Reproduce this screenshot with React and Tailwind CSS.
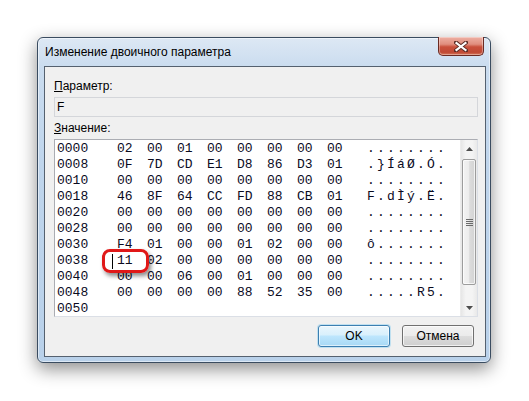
import React from 'react';

const rows = [
  ['0000', ['02', '00', '01', '00', '00', '00', '00', '00'], '........'],
  ['0008', ['0F', '7D', 'CD', 'E1', 'D8', '86', 'D3', '01'], '.}ÍáØ.Ó.'],
  ['0010', ['00', '00', '00', '00', '00', '00', '00', '00'], '........'],
  ['0018', ['46', '8F', '64', 'CC', 'FD', '88', 'CB', '01'], 'F.dÌý.Ë.'],
  ['0020', ['00', '00', '00', '00', '00', '00', '00', '00'], '........'],
  ['0028', ['00', '00', '00', '00', '00', '00', '00', '00'], '........'],
  ['0030', ['F4', '01', '00', '00', '01', '02', '00', '00'], 'ô.......'],
  ['0038', ['11', '02', '00', '00', '00', '00', '00', '00'], '........'],
  ['0040', ['00', '00', '06', '00', '01', '00', '00', '00'], '........'],
  ['0048', ['00', '00', '00', '00', '88', '52', '35', '00'], '.....R5.'],
  ['0050', [], ''],
];

function CloseButton() {
  return (
    <div className="-mt-px w-[46px] h-[19px] rounded-b-[5px] border border-[#6b2a22] border-t-0 bg-[linear-gradient(180deg,#eeb0a4_0%,#e08e7e_40%,#c9503c_55%,#c04a35_85%,#d77a5c_100%)] shadow-[inset_0_0_0_1px_rgba(255,255,255,0.35)] flex items-center justify-center">
      <svg width="14" height="11" viewBox="0 0 14 11">
        <path d="M2 1.5 L12 9.5 M12 1.5 L2 9.5" stroke="#5a2c26" strokeWidth="4" strokeLinecap="square" />
        <path d="M2.5 2 L11.5 9 M11.5 2 L2.5 9" stroke="#ffffff" strokeWidth="2.2" strokeLinecap="square" />
      </svg>
    </div>
  );
}

function Triangle({ down }) {
  return (
    <svg width="7" height="4" viewBox="0 0 7 4">
      <path d={down ? 'M0 0 H7 L3.5 4 Z' : 'M0 4 H7 L3.5 0 Z'} fill="#4d4d4d" />
    </svg>
  );
}

function ScrollBar() {
  return (
    <div className="w-[17px] h-full flex flex-col bg-[linear-gradient(90deg,#e6e6e6_0%,#f4f4f4_30%,#f4f4f4_70%,#e9e9e9_100%)] border-l border-[#ececec]">
      <div className="h-[17px] flex items-center justify-center">
        <Triangle />
      </div>
      <div className="mt-[2px] mx-[1px] h-[126px] rounded-[2px] border border-[#9c9c9c] bg-[linear-gradient(90deg,#f3f3f3_0%,#ececec_50%,#dcdcdc_55%,#d3d3d3_100%)] shadow-[inset_0_0_0_1px_rgba(255,255,255,0.7)] flex flex-col items-center justify-center gap-[1px]">
        <div className="w-[7px] h-px bg-[#6a6a6a]" />
        <div className="w-[7px] h-px bg-[#6a6a6a]" />
        <div className="w-[7px] h-px bg-[#6a6a6a]" />
        <div className="w-[7px] h-px bg-[#6a6a6a]" />
      </div>
      <div className="flex-1" />
      <div className="h-[17px] flex items-center justify-center">
        <Triangle down />
      </div>
    </div>
  );
}

function HexBox() {
  return (
    <div className="relative mt-[3px] w-[424px] h-[178px] bg-white border border-[#abadb3] border-r-[#dbdfe6] border-b-[#dbdfe6] flex">
      <div className="flex-1 pt-[1px] pl-[2px] font-['Liberation_Mono',monospace] text-[13px] text-[#0a0a1e]">
        {rows.map(([off, bytes, ascii]) => (
          <div key={off} className="h-[16px] leading-[16px] flex whitespace-pre">
            <span className="w-[60px]">{off}</span>
            {bytes.map((b, i) => (
              <span key={i} className="w-[30px]">{b}</span>
            ))}
            {ascii && (
              <span className="ml-[10px] flex">
                {ascii.split('').map((c, i) => (
                  <span key={i} className="w-[10px]">{c}</span>
                ))}
              </span>
            )}
          </div>
        ))}
      </div>
      <ScrollBar />
      <div className="absolute left-[57px] top-[114px] w-px h-[15px] bg-black" />
      <div className="absolute left-[47px] top-[109px] w-[47px] h-[24px] rounded-[8px] border-[3px] border-[#e01818] shadow-[2px_3px_4px_rgba(0,0,0,0.45)]" />
    </div>
  );
}

export default function App() {
  return (
    <div className="w-[529px] h-[401px] bg-white pt-[37px] pl-[37px] overflow-hidden font-['Liberation_Sans',Arial,sans-serif]">
      <div className="w-[454px] h-[326px] rounded-[6px] border border-[#3a4c60] bg-[linear-gradient(180deg,#dde8f4_0%,#cadcef_9%,#bfd5ec_40%,#b9d1ea_100%)] shadow-[0_6px_18px_rgba(0,0,0,0.45),inset_0_0_0_1px_rgba(255,255,255,0.5)] flex flex-col">
        <div className="h-[28px] flex items-start justify-between pl-[7px] pr-[6px]">
          <span className="mt-[7px] text-[12px] leading-[15px] text-black">Изменение двоичного параметра</span>
          <CloseButton />
        </div>
        <div className="ml-[6px] w-[442px] h-[291px] border border-[#55616f] bg-[#f0f0f0] pl-[9px] flex flex-col text-[12px] text-black">
          <div className="mt-[11px] leading-[16px]">
            <span className="underline">П</span>араметр:
          </div>
          <div className="mt-[3px] w-[424px] h-[20px] border border-[#d4d6da] bg-[#f0f0f0] pl-[2px] leading-[18px]">F</div>
          <div className="mt-[3px] leading-[16px]">
            <span className="underline">З</span>начение:
          </div>
          <HexBox />
          <div className="mt-[8px] w-[424px] flex justify-end gap-[12px] pr-[4px]">
            <button className="w-[72px] h-[22px] rounded-[3px] border border-[#3c7fb1] bg-[linear-gradient(180deg,#eaf6fd_0%,#d9f0fc_45%,#bee6fd_50%,#a7d9f5_100%)] shadow-[inset_0_0_0_1px_rgba(255,255,255,0.6),0_0_0_1px_rgba(120,200,240,0.4)] text-[12px] text-black">
              OK
            </button>
            <button className="w-[72px] h-[22px] rounded-[3px] border border-[#707070] bg-[linear-gradient(180deg,#f2f2f2_0%,#ebebeb_50%,#dddddd_50%,#cfcfcf_100%)] shadow-[inset_0_0_0_1px_rgba(255,255,255,0.7)] text-[12px] text-black">
              Отмена
            </button>
          </div>
        </div>
      </div>
    </div>
  );
}
